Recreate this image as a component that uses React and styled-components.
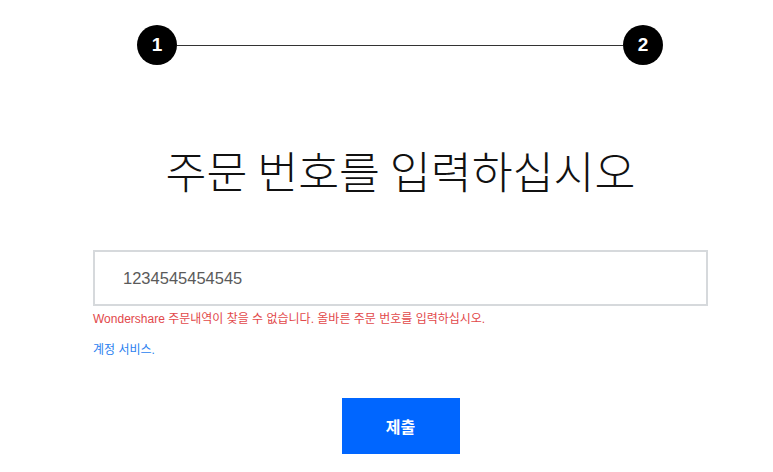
import React from "react";
import styled, { createGlobalStyle } from "styled-components";

const Global = createGlobalStyle`
  html, body { margin: 0; padding: 0; background: #fff; }
  body { font-family: "Liberation Sans", Arial, "Noto Sans CJK KR", sans-serif; }
  * { box-sizing: border-box; }
`;

const Page = styled.div`
  width: 615px;
  margin-left: 93px;
  display: flex;
  flex-direction: column;
`;

const Steps = styled.div`
  display: flex;
  align-items: center;
  margin: 25px 45px 0 44px;
`;

const StepDot = styled.div`
  width: 40px;
  height: 40px;
  border-radius: 50%;
  background: #000;
  color: #fff;
  display: flex;
  align-items: center;
  justify-content: center;
  font-size: 19px;
  font-weight: 700;
  flex: none;
`;

const StepLine = styled.div`
  flex: 1;
  height: 1px;
  background: #333;
`;

const Title = styled.h1`
  margin: 75px 0 0;
  text-align: center;
  font-family: "Noto Sans CJK KR", sans-serif;
  font-weight: 300;
  font-size: 44.5px;
  line-height: 60px;
  color: #111;
`;

const Input = styled.input`
  margin-top: 50px;
  width: 100%;
  height: 56px;
  border: 2px solid #d6d9dc;
  padding: 0 0 0 28px;
  font-family: "Liberation Sans", Arial, sans-serif;
  font-size: 16.5px;
  color: #5a5a5a;
  outline: none;
`;

const ErrorText = styled.div`
  margin-top: 5px;
  font-family: "Liberation Sans", Arial, "Noto Sans CJK KR", sans-serif;
  font-size: 12px;
  line-height: 16px;
  color: #e2484a;
`;

const Link = styled.a`
  margin-top: 15px;
  font-family: "Liberation Sans", Arial, "Noto Sans CJK KR", sans-serif;
  font-size: 12px;
  line-height: 16px;
  color: #2b7ff0;
  text-decoration: none;
  align-self: flex-start;
`;

const Submit = styled.button`
  margin-top: 40px;
  align-self: center;
  width: 118px;
  height: 56px;
  border: none;
  background: #0066ff;
  color: #fff;
  font-family: "Noto Sans CJK KR", sans-serif;
  font-weight: 700;
  font-size: 16px;
  cursor: pointer;
`;

export default function App() {
  return (
    <>
      <Global />
      <Page>
        <Steps>
          <StepDot>1</StepDot>
          <StepLine />
          <StepDot>2</StepDot>
        </Steps>
        <Title>주문 번호를 입력하십시오</Title>
        <Input defaultValue="1234545454545" />
        <ErrorText>Wondershare 주문내역이 찾을 수 없습니다. 올바른 주문 번호를 입력하십시오.</ErrorText>
        <Link href="#">계정 서비스.</Link>
        <Submit>제출</Submit>
      </Page>
    </>
  );
}
